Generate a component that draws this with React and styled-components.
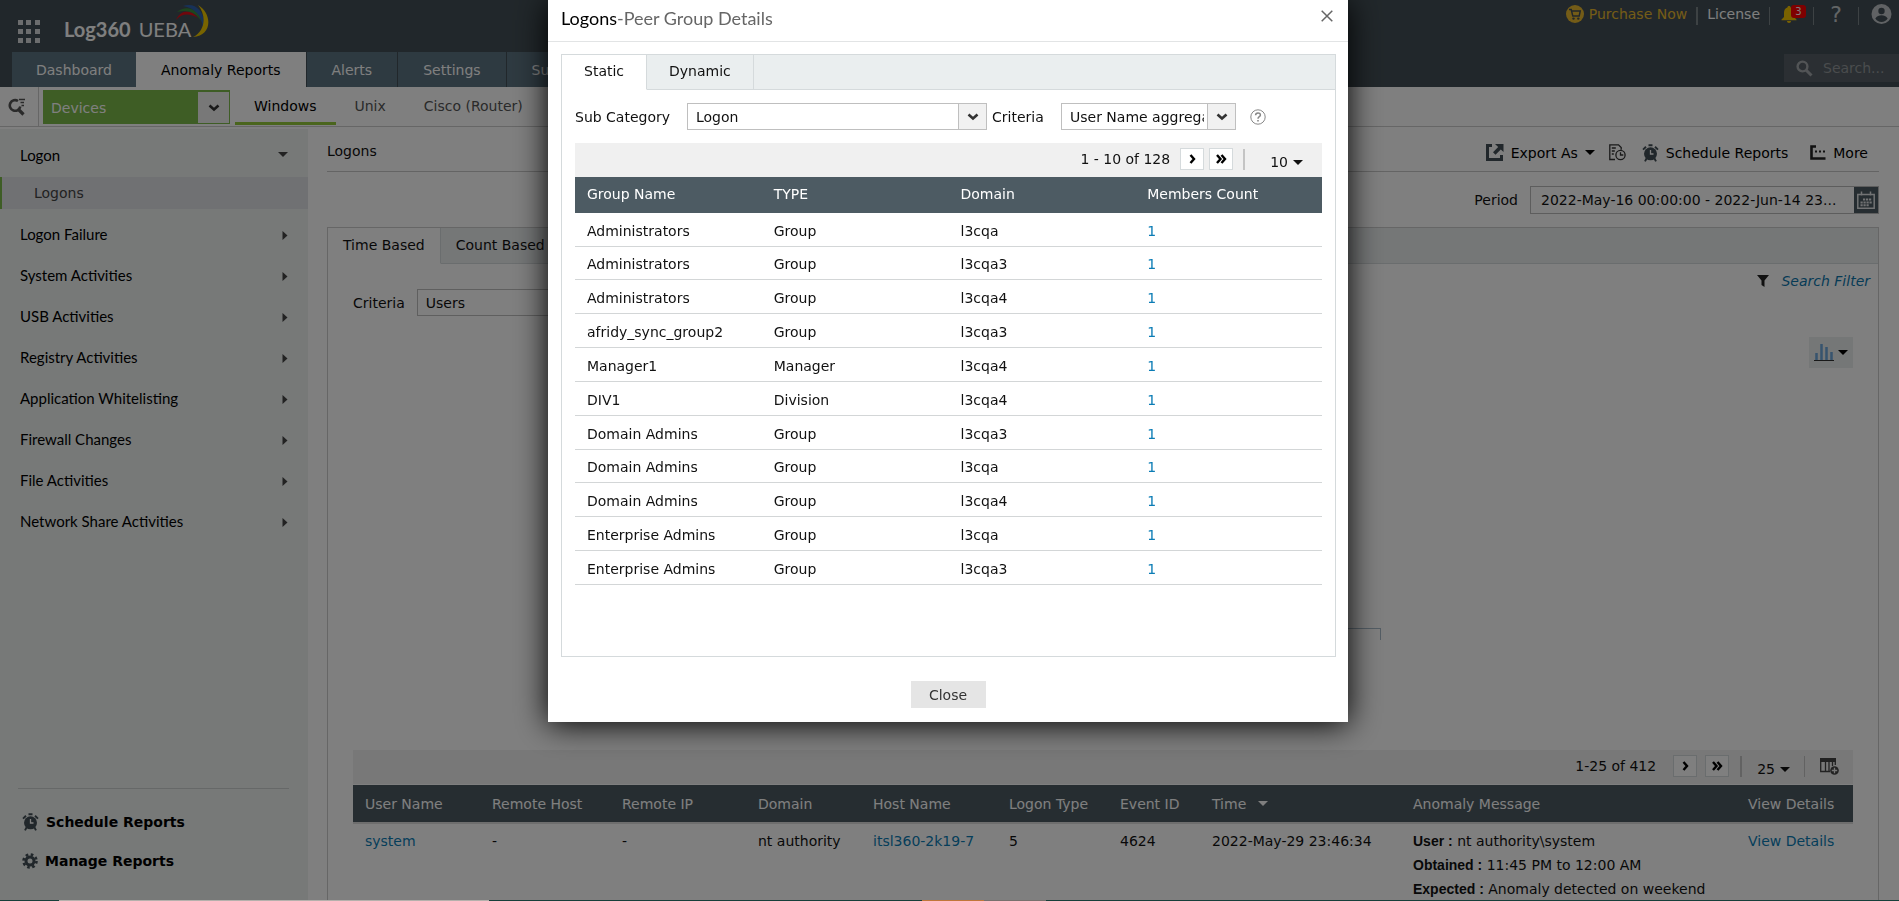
import React from 'react'
import styled, { createGlobalStyle, css } from 'styled-components'

const palette = {
  header: '#434f56',
  slate: '#4d5b63',
  tab: '#5d7482',
  green: '#7cbb4a',
  lime: '#95cb3b',
  link: '#0b7cb5',
  line: '#d5dadc',
  soft: '#eaeeef',
  text: '#111',
}

const GlobalStyle = createGlobalStyle`
  * {
    box-sizing: border-box;
  }

  body {
    margin: 0;
    overflow: hidden;
    background: #fff;
    color: ${palette.text};
    font: 14px/18px 'DejaVu Sans', Verdana, sans-serif;
  }

  button,
  input,
  select {
    font: inherit;
    color: inherit;
    margin: 0;
  }

  button {
    border: 0;
    padding: 0;
    background: none;
    cursor: pointer;
  }

  a {
    color: inherit;
    text-decoration: none;
  }

  svg {
    display: block;
    flex: none;
  }
`

/* ---------- page shell ---------- */

const Page = styled.div`
  display: flex;
  flex-direction: column;
  height: 100vh;
  overflow: hidden;
`

const Header = styled.header`
  flex: none;
  background: ${palette.header};
`

const TopBar = styled.div`
  display: flex;
  justify-content: space-between;
  height: 52px;
  padding-left: 18px;
`

const Brand = styled.div`
  display: flex;
  align-items: flex-start;
  gap: 24px;

  button {
    padding-top: 20px;
  }
`

const Logo = styled.a`
  position: relative;
  display: flex;
  gap: 8px;
  padding: 17px 18px 0 0;
  color: #fff;
  font: 700 20px/24px Lato, sans-serif;

  span {
    font-weight: 400;
  }

  svg {
    position: absolute;
    right: 0;
    top: 4px;
  }
`

const Account = styled.div`
  display: flex;
  align-items: flex-start;
  padding-top: 5px;
`

const AccountItem = styled.a`
  display: flex;
  align-items: center;
  gap: 5px;
  height: 18px;
  padding: 0 9px;
  color: ${(p) => (p.$gold ? '#e8b92e' : '#fff')};

  &:last-child {
    padding: 0 7px 0 12px;
  }
`

const Separator = styled.span`
  flex: none;
  width: ${(p) => p.$width || 1}px;
  height: 18px;
  margin-top: 2px;
  background: #7b8488;
`

const Bell = styled.button`
  position: relative;
  width: 43px;
  height: 18px;
  padding-left: 11px;
`

const Badge = styled.span`
  position: absolute;
  left: 21px;
  top: 0;
  width: 15px;
  height: 13px;
  border-radius: 3px;
  background: #f00;
  color: #fff;
  font: 10px/13px 'DejaVu Sans', sans-serif;
`

const Help = styled.button`
  width: 44px;
  color: #c5cacd;
  font-size: 22px;
  line-height: 20px;
`

const NavRow = styled.nav`
  display: flex;
  align-items: flex-start;
  padding-left: 12px;
`

const NavTab = styled.a`
  height: 35px;
  padding: 0 25px;
  margin-right: 1px;
  line-height: 36px;
  background: ${palette.tab};
  color: #fff;

  &:first-child {
    padding: 0 24px;
  }

  ${(p) =>
    p.$active &&
    css`
      background: #fff;
      color: #000;
      margin-left: -1px;
    `}
`

const Search = styled.label`
  display: flex;
  align-items: center;
  gap: 10px;
  width: 115px;
  height: 28px;
  margin: 2px 0 0 auto;
  padding-left: 12px;
  background: #565f66;
  color: #a4a9ac;

  input {
    width: 80px;
    border: 0;
    padding: 0;
    background: none;
  }

  input::placeholder {
    color: #94999c;
    opacity: 1;
  }
`

const SubBar = styled.div`
  display: flex;
  flex: none;
  height: 40px;
  border-bottom: 1px solid #ccc;
`

const FindButton = styled.button`
  display: flex;
  align-items: center;
  width: 39px;
  padding-left: 8px;
  border-right: 1px solid #ccc;
  color: #555;
`

const Platform = styled.a`
  height: 36px;
  padding: 0 19px;
  margin-top: 2px;
  line-height: 34px;
  color: #555;

  ${(p) =>
    p.$active &&
    css`
      color: #000;
      border-bottom: 3px solid ${palette.lime};
    `}
`

const Platforms = styled.nav`
  display: flex;
  padding-left: 5px;
`

const Columns = styled.div`
  display: flex;
  flex: 1;
  min-height: 0;
`

/* ---------- form parts ---------- */

const SelectFrame = styled.span`
  display: flex;
  width: ${(p) => p.$width}px;
  height: 27px;
  border: 1px solid #bfbfbf;
  background: #fff;

  select {
    flex: 1;
    min-width: 0;
    appearance: none;
    border: 0;
    padding: 0 3px 0 8px;
    background: none;
    outline: none;
  }

  ${(p) =>
    p.$green &&
    css`
      height: 34px;
      margin: 3px 0 0 4px;
      border: 0;
      padding: 2px 1px 1px 0;
      background: ${palette.green};
      color: #fff;
    `}
`

const SelectArrow = styled.span`
  display: flex;
  align-items: center;
  justify-content: center;
  width: ${(p) => (p.$green ? 31 : 28)}px;
  border-left: ${(p) => (p.$green ? 0 : 1)}px solid #bfbfbf;
  background: #f1f1f1;
  color: #333;
`

const Chevron = () => (
  <svg width="12" height="8" viewBox="0 0 12 8">
    <path d="M1.5 1.5 6 5.5l4.5-4" fill="none" stroke="currentColor" strokeWidth="2.6" />
  </svg>
)

const Select = ({ id, value, width, green, label }) => (
  <SelectFrame $width={width} $green={green}>
    <select id={id} defaultValue={value} aria-label={label}>
      <option>{value}</option>
    </select>
    <SelectArrow $green={green} aria-hidden="true">
      <Chevron />
    </SelectArrow>
  </SelectFrame>
)

/* ---------- sidebar ---------- */

const Sidebar = styled.aside`
  display: flex;
  flex-direction: column;
  flex: none;
  width: 308px;
  margin-top: 2px;
  padding-top: 5px;
  background: #eef2f1;
`

const Category = styled.button`
  display: flex;
  flex: none;
  align-items: center;
  justify-content: space-between;
  height: 41px;
  padding: 0 20px;
  font: 15px/20px Lato, sans-serif;
  text-align: left;
  color: #000;

  svg {
    margin-top: 4px;
    color: #444;
  }

  &:first-child svg {
    margin-top: 0;
  }
`

const SubItem = styled.a`
  flex: none;
  height: 32px;
  margin: 2px 0 4px;
  padding-left: 32px;
  border-left: 2px solid ${palette.green};
  line-height: 32px;
  background: #e0e2e6;
  color: #444;
`

const SidebarFooter = styled.div`
  display: flex;
  flex-direction: column;
  gap: 15px;
  margin: auto 19px 28px 18px;
  padding-top: 21px;
  border-top: 1px solid #ccd0d0;
`

const FooterLink = styled.a`
  display: flex;
  align-items: center;
  gap: 7px;
  height: 24px;
  padding-left: 4px;
  font-weight: 700;
  color: #000;
`

/* ---------- report ---------- */

const Main = styled.main`
  display: flex;
  flex: 1;
  flex-direction: column;
  min-width: 0;
  padding: 0 20px 0 19px;
`

const TitleRow = styled.div`
  display: flex;
  flex: none;
  align-items: center;
  justify-content: space-between;
  height: 45px;
  padding: 4px 11px 0 0;
  border-bottom: 1px solid #c9c9c9;
`

const Actions = styled.div`
  display: flex;
  align-items: center;
  padding-top: 3px;
`

const Action = styled.button`
  display: flex;
  align-items: center;
  gap: 7px;
  margin-left: ${(p) => p.$gap || 0}px;
  color: #000;
`

const PeriodRow = styled.div`
  display: flex;
  flex: none;
  align-items: center;
  justify-content: flex-end;
  height: 55px;
  gap: 12px;
`

const PeriodField = styled.div`
  display: flex;
  width: 349px;
  height: 28px;
  border: 1px solid #bbb;

  input {
    flex: 1;
    min-width: 0;
    border: 0;
    padding: 0 10px;
    background: none;
  }

  button {
    display: flex;
    align-items: center;
    justify-content: center;
    width: 24px;
    background: ${palette.slate};
  }
`

const Panel = styled.section`
  flex: 1;
  border: 1px solid #ccc;
`

const TabBar = styled.div`
  display: flex;
  height: ${(p) => p.$height}px;
  border-bottom: 1px solid ${palette.line};
  background: ${palette.soft};
`

const Tab = styled.button`
  margin-bottom: -1px;
  padding: 0 ${(p) => p.$pad}px 2px;
  border-right: 1px solid ${palette.line};
  border-bottom: 1px solid ${(p) => (p.$active ? '#fff' : palette.line)};
  background: ${(p) => (p.$active ? '#fff' : 'transparent')};
  color: #111;
`

const PanelBody = styled.div`
  padding: 0 25px;
`

const FilterRow = styled.div`
  display: flex;
  justify-content: space-between;
  height: 73px;
  margin-right: -17px;
`

const CriteriaField = styled.div`
  display: flex;
  align-items: center;
  gap: 12px;
  height: 27px;
  margin-top: 25px;
`

const SearchFilter = styled.a`
  display: flex;
  align-items: center;
  gap: 12px;
  height: 18px;
  margin-top: 8px;
  font-style: italic;
  color: #0d77ad;
`

const Chart = styled.div`
  display: flex;
  flex-direction: column;
  height: 413px;
`

const ChartType = styled.button`
  display: flex;
  align-items: center;
  align-self: flex-end;
  gap: 4px;
  width: 44px;
  height: 31px;
  padding-left: 5px;
  background: #eaeeef;
  color: #000;
`

const Axis = styled.div`
  width: 37%;
  height: 12px;
  margin: 260px 0 0 31.5%;
  border: 1px solid #a9bccb;
  border-bottom: 0;
`

const Toolbar = styled.div`
  display: flex;
  align-items: center;
  justify-content: flex-end;
  height: 34px;
  padding: 0 ${(p) => p.$end}px 2px 0;
  background: #f0f0f0;
`

const PageButton = styled.button`
  display: flex;
  align-items: center;
  justify-content: center;
  width: 24px;
  height: 22px;
  margin-left: ${(p) => p.$gap}px;
  border: 1px solid ${palette.line};
  background: #fff;
  color: #000;
`

const Rule = styled.span`
  width: ${(p) => p.$width}px;
  height: 21px;
  margin-left: ${(p) => p.$gap}px;
  background: #c4c4c4;
`

const PageSize = styled.button`
  display: flex;
  align-items: center;
  gap: 5px;
  margin-left: ${(p) => p.$gap}px;
  padding-top: 6px;
`

const ColumnsButton = styled.button`
  margin-left: 15px;
`

const Col = styled.col`
  width: ${(p) => p.$width}px;
`

const DataTable = styled.table`
  width: 100%;
  table-layout: fixed;
  border-collapse: collapse;

  th,
  td {
    padding: 0 0 0 12px;
    text-align: left;
    font-weight: 400;
  }

  th {
    background: ${palette.slate};
    color: #fff;
  }

  a {
    color: ${palette.link};
  }
`

const EventTable = styled(DataTable)`
  margin-top: 1px;

  th {
    height: 38px;
    white-space: nowrap;
  }

  td {
    padding-top: 5px;
    border-top: 2px solid #ddd;
    line-height: 24px;
    vertical-align: top;
    white-space: nowrap;
  }

  b {
    font: 700 14px/24px 'Liberation Sans', sans-serif;
  }
`

const SortButton = styled.button`
  display: flex;
  align-items: center;
  gap: 12px;
  color: #fff;
`

const GroupTable = styled(DataTable)`
  height: 408px;

  th {
    height: 36px;
    padding-bottom: 2px;
  }

  td {
    padding-top: 3px;
    border-bottom: 1px solid #d3d6d7;
  }
`

/* ---------- dialog ---------- */

const Overlay = styled.div`
  position: fixed;
  inset: 0;
  display: flex;
  align-items: flex-start;
  justify-content: center;
  padding-right: 3px;
  background: rgba(0, 0, 0, 0.5);
`

const Dialog = styled.section`
  width: 800px;
  background: #fff;
  box-shadow: 0 2px 30px #000;
`

const DialogHead = styled.header`
  display: flex;
  align-items: flex-start;
  justify-content: space-between;
  height: 42px;
  padding: 7px 15px 0 13px;
  border-bottom: 1px solid #e2e4e5;

  button {
    padding-top: 3px;
  }
`

const DialogTitle = styled.h2`
  margin: 0;
  font: 400 18px/22px Lato, sans-serif;
  color: #666;

  span {
    color: #000;
  }
`

const GroupPanel = styled.div`
  min-height: 603px;
  margin: 12px 12px 0 13px;
  border: 1px solid ${palette.line};
`

const GroupBody = styled.div`
  padding: 13px 13px 0;
`

const GroupFilters = styled.div`
  display: flex;
  align-items: center;
  height: 27px;
  margin-bottom: 13px;

  label {
    width: 112px;
  }

  label ~ label {
    width: 69px;
    margin-left: 5px;
  }

  button {
    margin-left: 14px;
  }
`

const DialogFoot = styled.footer`
  display: flex;
  justify-content: center;
  padding: 24px 0 14px;

  button {
    width: 75px;
    height: 27px;
    background: #e5e5e5;
    color: #333;
  }
`

const Strip = styled.div`
  position: fixed;
  inset: auto 0 0;
  height: 1px;
  background: linear-gradient(
    90deg,
    #173f3a 59px,
    #b5b0ac 59px 489px,
    #173f3a 489px 922px,
    #c1763a 922px 984px,
    #77716e 984px 1046px,
    #173f3a 1046px
  );
`

/* ---------- icons ---------- */

const AppsIcon = () => (
  <svg width="22" height="23" viewBox="0 0 22 23" fill="#d8dbdd">
    {[0, 9, 18].map((y) =>
      [0, 8, 17].map((x) => <rect key={`${x}-${y}`} x={x} y={y} width="5" height="5" />)
    )}
  </svg>
)

const LogoArcs = () => (
  <svg width="35" height="34" viewBox="0 0 35 34">
    <path d="M2 16C6 6 17 4 24 14 16 9 8 9 2 16z" fill="#e00f18" />
    <path d="M3 8c9-7 21-4 25 10C22 8 13 5 3 8z" fill="#3a8c3f" />
    <path d="M9 2c13-5 24 8 20 22C28 12 21 4 9 2z" fill="#2f62b0" />
    <path d="M24 1c15 9 14 31-5 32C31 27 33 12 24 1z" fill="#f0c800" />
  </svg>
)

const CartIcon = () => (
  <svg width="18" height="18" viewBox="0 0 18 18">
    <circle cx="9" cy="9" r="9" fill="#e8b92e" />
    <path d="M3 4.5h2.2l1.6 6.600h6.400l1-5H5.800" fill="none" stroke={palette.header} strokeWidth="1.5" />
    <circle cx="7.5" cy="13.600" r="1.2" fill={palette.header} />
    <circle cx="12.3" cy="13.600" r="1.2" fill={palette.header} />
  </svg>
)

const BellIcon = () => (
  <svg width="16" height="17" viewBox="0 0 16 17" fill="#f5c400">
    <path d="M8 0c1 0 1.6.6 1.6 1.6C12 2.4 13 4.3 13 7v4l2.5 2.5v.8H.5v-.8L3 11V7c0-2.700 1-4.600 3.400-5.400C6.400.6 7 0 8 0z" />
    <path d="M6 15h4c0 1.2-.8 2-2 2s-2-.8-2-2z" />
  </svg>
)

const UserIcon = () => (
  <svg width="21" height="20" viewBox="0 0 20 20">
    <circle cx="10" cy="10" r="10" fill="#c0c5c8" />
    <circle cx="10" cy="7" r="3.2" fill={palette.header} />
    <path
      d="M3.8 14.5c1.400-2.600 3.800-3.300 6.200-3.300s4.800.7 6.200 3.300A7.600 7.600 0 0 1 10 18a7.600 7.600 0 0 1-6.200-3.500z"
      fill={palette.header}
    />
  </svg>
)

const SearchIcon = () => (
  <svg width="17" height="17" viewBox="0 0 17 17" fill="none" stroke="currentColor">
    <circle cx="6.5" cy="6.5" r="4.9" strokeWidth="2.4" />
    <path d="m10 10 5.5 5.5" strokeWidth="3" />
  </svg>
)

const FindIcon = () => (
  <svg width="18" height="18" viewBox="0 0 18 18" fill="none" stroke="currentColor">
    <path d="M10 3A5.300 5.300 0 1 0 12.300 8.500" strokeWidth="2.600" />
    <path d="m10.500 11.500 5 5" strokeWidth="3.200" />
    <path d="M11 1.500h6M12.500 4.500H16M13.500 7.500H16" strokeWidth="1.300" />
  </svg>
)

const Caret = ({ right }) =>
  right ? (
    <svg width="6" height="9" viewBox="0 0 6 9">
      <path d="M.5 0v9L5.500 4.500z" fill="currentColor" />
    </svg>
  ) : (
    <svg width="10" height="5" viewBox="0 0 10 5">
      <path d="M0 0h10L5 5z" fill="currentColor" />
    </svg>
  )

const ExportIcon = () => (
  <svg width="18" height="17" viewBox="0 0 18 17">
    <path d="M6 1.5H1.500v14h14V11" fill="none" stroke={palette.header} strokeWidth="3" />
    <path d="M9 0h8.500v8L14.800 5.400 9.500 10.700 7 8.200l5.200-5.300z" fill={palette.header} />
  </svg>
)

const HistoryIcon = () => (
  <svg width="17" height="17" viewBox="0 0 17 17" fill="none" stroke="#333" strokeWidth="1.300">
    <path d="M6 15.500H.8V.8h8.700l2.700 2.700v2.200M2.800 4h4M2.800 7h3M2.800 10h2" />
    <circle cx="11.500" cy="11" r="4.600" />
    <path d="M11.500 8.200V11h2.800" />
  </svg>
)

const AlarmIcon = () => (
  <svg width="17" height="18" viewBox="0 0 17 18">
    <circle cx="8.5" cy="9.800" r="6.500" fill={palette.header} />
    <path
      d="M6.500 1.200h4M1 5.600 4 2.800M16 5.600 13 2.800M4.500 14.500 3 17.400M12.500 14.500l1.500 2.900"
      stroke={palette.header}
      strokeWidth="1.900"
    />
    <path d="M8.500 6v4h3" fill="none" stroke="#fff" strokeWidth="1.300" />
  </svg>
)

const GearIcon = () => (
  <svg width="16" height="16" viewBox="0 0 16 16" fill="none" stroke={palette.header}>
    <circle cx="8" cy="8" r="4" strokeWidth="3" />
    <circle cx="8" cy="8" r="6.500" strokeWidth="2.600" strokeDasharray="2.600 2.500" />
  </svg>
)

const MoreIcon = () => (
  <svg width="16" height="15" viewBox="0 0 16 15">
    <path d="M6 1.500H1.500v12h14" fill="none" stroke="#222" strokeWidth="2.600" />
    <path d="M5 5.500h2v2H5zM9 5.500h2v2H9zM13 5.500h2v2h-2z" fill="#222" />
  </svg>
)

const CalendarIcon = () => (
  <svg width="18" height="18" viewBox="0 0 18 18" fill="none" stroke="#e4e7e8">
    <path d="M.8 3.500h16.400v13.700H.8zM4.500.5v4M13.500.5v4" strokeWidth="1.500" />
    <path d="M6 8.500h9M3.500 11.500H15M3.500 14.300h9" strokeWidth="2" strokeDasharray="2.200 .8" />
  </svg>
)

const FunnelIcon = () => (
  <svg width="12" height="12" viewBox="0 0 12 12">
    <path d="M0 0h12L7.500 5.500V12l-3-2V5.500z" fill="#222" />
  </svg>
)

const BarsIcon = () => (
  <svg width="20" height="18" viewBox="0 0 20 18">
    <path d="M2.500 16v-7M7.500 16V0M12.500 16V3M17.500 16V8" stroke="#6fa8dc" strokeWidth="2.500" />
    <path d="M0 16.500h20" stroke="#333" />
  </svg>
)

const NextIcon = ({ double }) => (
  <svg width={double ? 11 : 7} height="10" viewBox={double ? '0 0 11 10' : '0 0 7 10'}>
    <path
      d={double ? 'M1 1l3.500 4L1 9M5.500 1 9 5 5.500 9' : 'M1.500 1 5 5 1.500 9'}
      fill="none"
      stroke="currentColor"
      strokeWidth="2.400"
    />
  </svg>
)

const AddColumnIcon = () => (
  <svg width="19" height="17" viewBox="0 0 19 17" fill="none" stroke="#444">
    <path d="M0 2h16" strokeWidth="4" />
    <path d="M.7 3v10.500H10M5.500 3v10M9 3v10M12.500 3v5M15.300 3v4" strokeWidth="1.300" />
    <circle cx="14.500" cy="12.500" r="4.300" fill="#444" stroke="none" />
    <path d="M14.500 9.800v5.400M11.800 12.500h5.400" stroke="#eee" strokeWidth="1.300" />
  </svg>
)

const HelpIcon = () => (
  <svg width="16" height="16" viewBox="0 0 16 16" fill="none" stroke="#888">
    <circle cx="8" cy="8" r="7.200" />
    <path d="M5.600 6.200C5.600 3.200 10.400 3.200 10.400 6 10.400 7.700 8 7.600 8 9.700" strokeWidth="1.500" />
    <path d="M8 11v1.600" strokeWidth="1.600" />
  </svg>
)

const CloseIcon = () => (
  <svg width="12" height="12" viewBox="0 0 12 12">
    <path d="M.7.7l10.600 10.600M11.300.7.7 11.300" stroke="#666" strokeWidth="1.500" />
  </svg>
)

/* ---------- data ---------- */

const categories = [
  'Logon Failure',
  'System Activities',
  'USB Activities',
  'Registry Activities',
  'Application Whitelisting',
  'Firewall Changes',
  'File Activities',
  'Network Share Activities',
]

const groups = [
  ['Administrators', 'Group', 'l3cqa'],
  ['Administrators', 'Group', 'l3cqa3'],
  ['Administrators', 'Group', 'l3cqa4'],
  ['afridy_sync_group2', 'Group', 'l3cqa3'],
  ['Manager1', 'Manager', 'l3cqa4'],
  ['DIV1', 'Division', 'l3cqa4'],
  ['Domain Admins', 'Group', 'l3cqa3'],
  ['Domain Admins', 'Group', 'l3cqa'],
  ['Domain Admins', 'Group', 'l3cqa4'],
  ['Enterprise Admins', 'Group', 'l3cqa'],
  ['Enterprise Admins', 'Group', 'l3cqa3'],
]

const eventColumns = [
  ['User Name', 127],
  ['Remote Host', 130],
  ['Remote IP', 136],
  ['Domain', 115],
  ['Host Name', 136],
  ['Logon Type', 111],
  ['Event ID', 92],
  ['Time', 201],
  ['Anomaly Message', 335],
  ['View Details', 117],
]

/* ---------- sections ---------- */

const PageHeader = () => (
  <Header>
    <TopBar>
      <Brand>
        <button aria-label="Apps">
          <AppsIcon />
        </button>
        <Logo href="#home">
          Log360 <span>UEBA</span>
          <LogoArcs />
        </Logo>
      </Brand>
      <Account>
        <AccountItem href="#purchase" $gold>
          <CartIcon /> Purchase Now
        </AccountItem>
        <Separator $width={2} />
        <AccountItem href="#license">License</AccountItem>
        <Separator />
        <Bell aria-label="Notifications">
          <BellIcon />
          <Badge>3</Badge>
        </Bell>
        <Separator />
        <Help>?</Help>
        <Separator />
        <AccountItem href="#account" aria-label="Account">
          <UserIcon />
        </AccountItem>
      </Account>
    </TopBar>
    <NavRow>
      <NavTab href="#dashboard">Dashboard</NavTab>
      <NavTab href="#reports" $active>
        Anomaly Reports
      </NavTab>
      <NavTab href="#alerts">Alerts</NavTab>
      <NavTab href="#settings">Settings</NavTab>
      <NavTab href="#support">Support</NavTab>
      <Search>
        <SearchIcon />
        <input placeholder="Search..." aria-label="Search" />
      </Search>
    </NavRow>
  </Header>
)

const ReportSidebar = () => (
  <Sidebar>
    <Category>
      Logon <Caret />
    </Category>
    <SubItem href="#logons">Logons</SubItem>
    {categories.map((name) => (
      <Category key={name}>
        {name} <Caret right />
      </Category>
    ))}
    <SidebarFooter>
      <FooterLink href="#schedule">
        <AlarmIcon /> Schedule Reports
      </FooterLink>
      <FooterLink href="#manage">
        <GearIcon /> Manage Reports
      </FooterLink>
    </SidebarFooter>
  </Sidebar>
)

const Events = () => (
  <>
    <Toolbar $end={14}>
      <span>1-25 of 412</span>
      <PageButton $gap={17} aria-label="Next page">
        <NextIcon />
      </PageButton>
      <PageButton $gap={8} aria-label="Last page">
        <NextIcon double />
      </PageButton>
      <Rule $width={2} $gap={11} />
      <PageSize $gap={15}>
        25 <Caret />
      </PageSize>
      <Rule $width={1} $gap={14} />
      <ColumnsButton aria-label="Add columns">
        <AddColumnIcon />
      </ColumnsButton>
    </Toolbar>
    <EventTable>
      <colgroup>
        {eventColumns.map(([name, width]) => (
          <Col key={name} $width={width} />
        ))}
      </colgroup>
      <thead>
        <tr>
          {eventColumns.map(([name]) => (
            <th key={name}>
              {name === 'Time' ? (
                <SortButton>
                  Time <Caret />
                </SortButton>
              ) : (
                name
              )}
            </th>
          ))}
        </tr>
      </thead>
      <tbody>
        <tr>
          <td>
            <a href="#system">system</a>
          </td>
          <td>-</td>
          <td>-</td>
          <td>nt authority</td>
          <td>
            <a href="#host">itsl360-2k19-7</a>
          </td>
          <td>5</td>
          <td>4624</td>
          <td>2022-May-29 23:46:34</td>
          <td>
            <b>User :</b> nt authority\system
            <br />
            <b>Obtained :</b> 11:45 PM to 12:00 AM
            <br />
            <b>Expected :</b> Anomaly detected on weekend
          </td>
          <td>
            <a href="#details">View Details</a>
          </td>
        </tr>
      </tbody>
    </EventTable>
  </>
)

const Report = () => (
  <Main>
    <TitleRow>
      <span>Logons</span>
      <Actions>
        <Action>
          <ExportIcon /> Export As <Caret />
        </Action>
        <Action $gap={14} aria-label="Export history">
          <HistoryIcon />
        </Action>
        <Action $gap={16}>
          <AlarmIcon /> Schedule Reports
        </Action>
        <Action $gap={22}>
          <MoreIcon /> More
        </Action>
      </Actions>
    </TitleRow>
    <PeriodRow>
      <label htmlFor="period">Period</label>
      <PeriodField>
        <input id="period" readOnly value="2022-May-16 00:00:00 - 2022-Jun-14 23..." />
        <button aria-label="Choose dates">
          <CalendarIcon />
        </button>
      </PeriodField>
    </PeriodRow>
    <Panel>
      <TabBar $height={36}>
        <Tab $active $pad={15}>
          Time Based
        </Tab>
        <Tab $pad={15}>Count Based</Tab>
      </TabBar>
      <PanelBody>
        <FilterRow>
          <CriteriaField>
            <label htmlFor="criteria">Criteria</label>
            <Select id="criteria" value="Users" width={200} />
          </CriteriaField>
          <SearchFilter href="#filter">
            <FunnelIcon /> Search Filter
          </SearchFilter>
        </FilterRow>
        <Chart>
          <ChartType aria-label="Chart type">
            <BarsIcon />
            <Caret />
          </ChartType>
          <Axis />
        </Chart>
        <Events />
      </PanelBody>
    </Panel>
  </Main>
)

const PeerGroupDialog = () => (
  <Dialog role="dialog" aria-modal="true" aria-labelledby="dialog-title">
    <DialogHead>
      <DialogTitle id="dialog-title">
        <span>Logons</span>-Peer Group Details
      </DialogTitle>
      <button aria-label="Close dialog">
        <CloseIcon />
      </button>
    </DialogHead>
    <GroupPanel>
      <TabBar $height={35}>
        <Tab $active $pad={22}>
          Static
        </Tab>
        <Tab $pad={22}>Dynamic</Tab>
      </TabBar>
      <GroupBody>
        <GroupFilters>
          <label htmlFor="sub-category">Sub Category</label>
          <Select id="sub-category" value="Logon" width={300} />
          <label htmlFor="group-criteria">Criteria</label>
          <Select id="group-criteria" value="User Name aggregation" width={175} />
          <button aria-label="Help">
            <HelpIcon />
          </button>
        </GroupFilters>
        <Toolbar $end={19}>
          <span>1 - 10 of 128</span>
          <PageButton $gap={10} aria-label="Next page">
            <NextIcon />
          </PageButton>
          <PageButton $gap={5} aria-label="Last page">
            <NextIcon double />
          </PageButton>
          <Rule $width={2} $gap={10} />
          <PageSize $gap={25}>
            10 <Caret />
          </PageSize>
        </Toolbar>
        <GroupTable>
          <thead>
            <tr>
              <th>Group Name</th>
              <th>TYPE</th>
              <th>Domain</th>
              <th>Members Count</th>
            </tr>
          </thead>
          <tbody>
            {groups.map(([name, type, domain]) => (
              <tr key={name + domain}>
                <td>{name}</td>
                <td>{type}</td>
                <td>{domain}</td>
                <td>
                  <a href="#members">1</a>
                </td>
              </tr>
            ))}
          </tbody>
        </GroupTable>
      </GroupBody>
    </GroupPanel>
    <DialogFoot>
      <button>Close</button>
    </DialogFoot>
  </Dialog>
)

const App = () => (
  <>
    <GlobalStyle />
    <Page>
      <PageHeader />
      <SubBar>
        <FindButton aria-label="Find report">
          <FindIcon />
        </FindButton>
        <Select value="Devices" width={187} green label="Source" />
        <Platforms>
          <Platform href="#windows" $active>
            Windows
          </Platform>
          <Platform href="#unix">Unix</Platform>
          <Platform href="#cisco">Cisco (Router)</Platform>
        </Platforms>
      </SubBar>
      <Columns>
        <ReportSidebar />
        <Report />
      </Columns>
    </Page>
    <Overlay>
      <PeerGroupDialog />
    </Overlay>
    <Strip />
  </>
)

export default App
